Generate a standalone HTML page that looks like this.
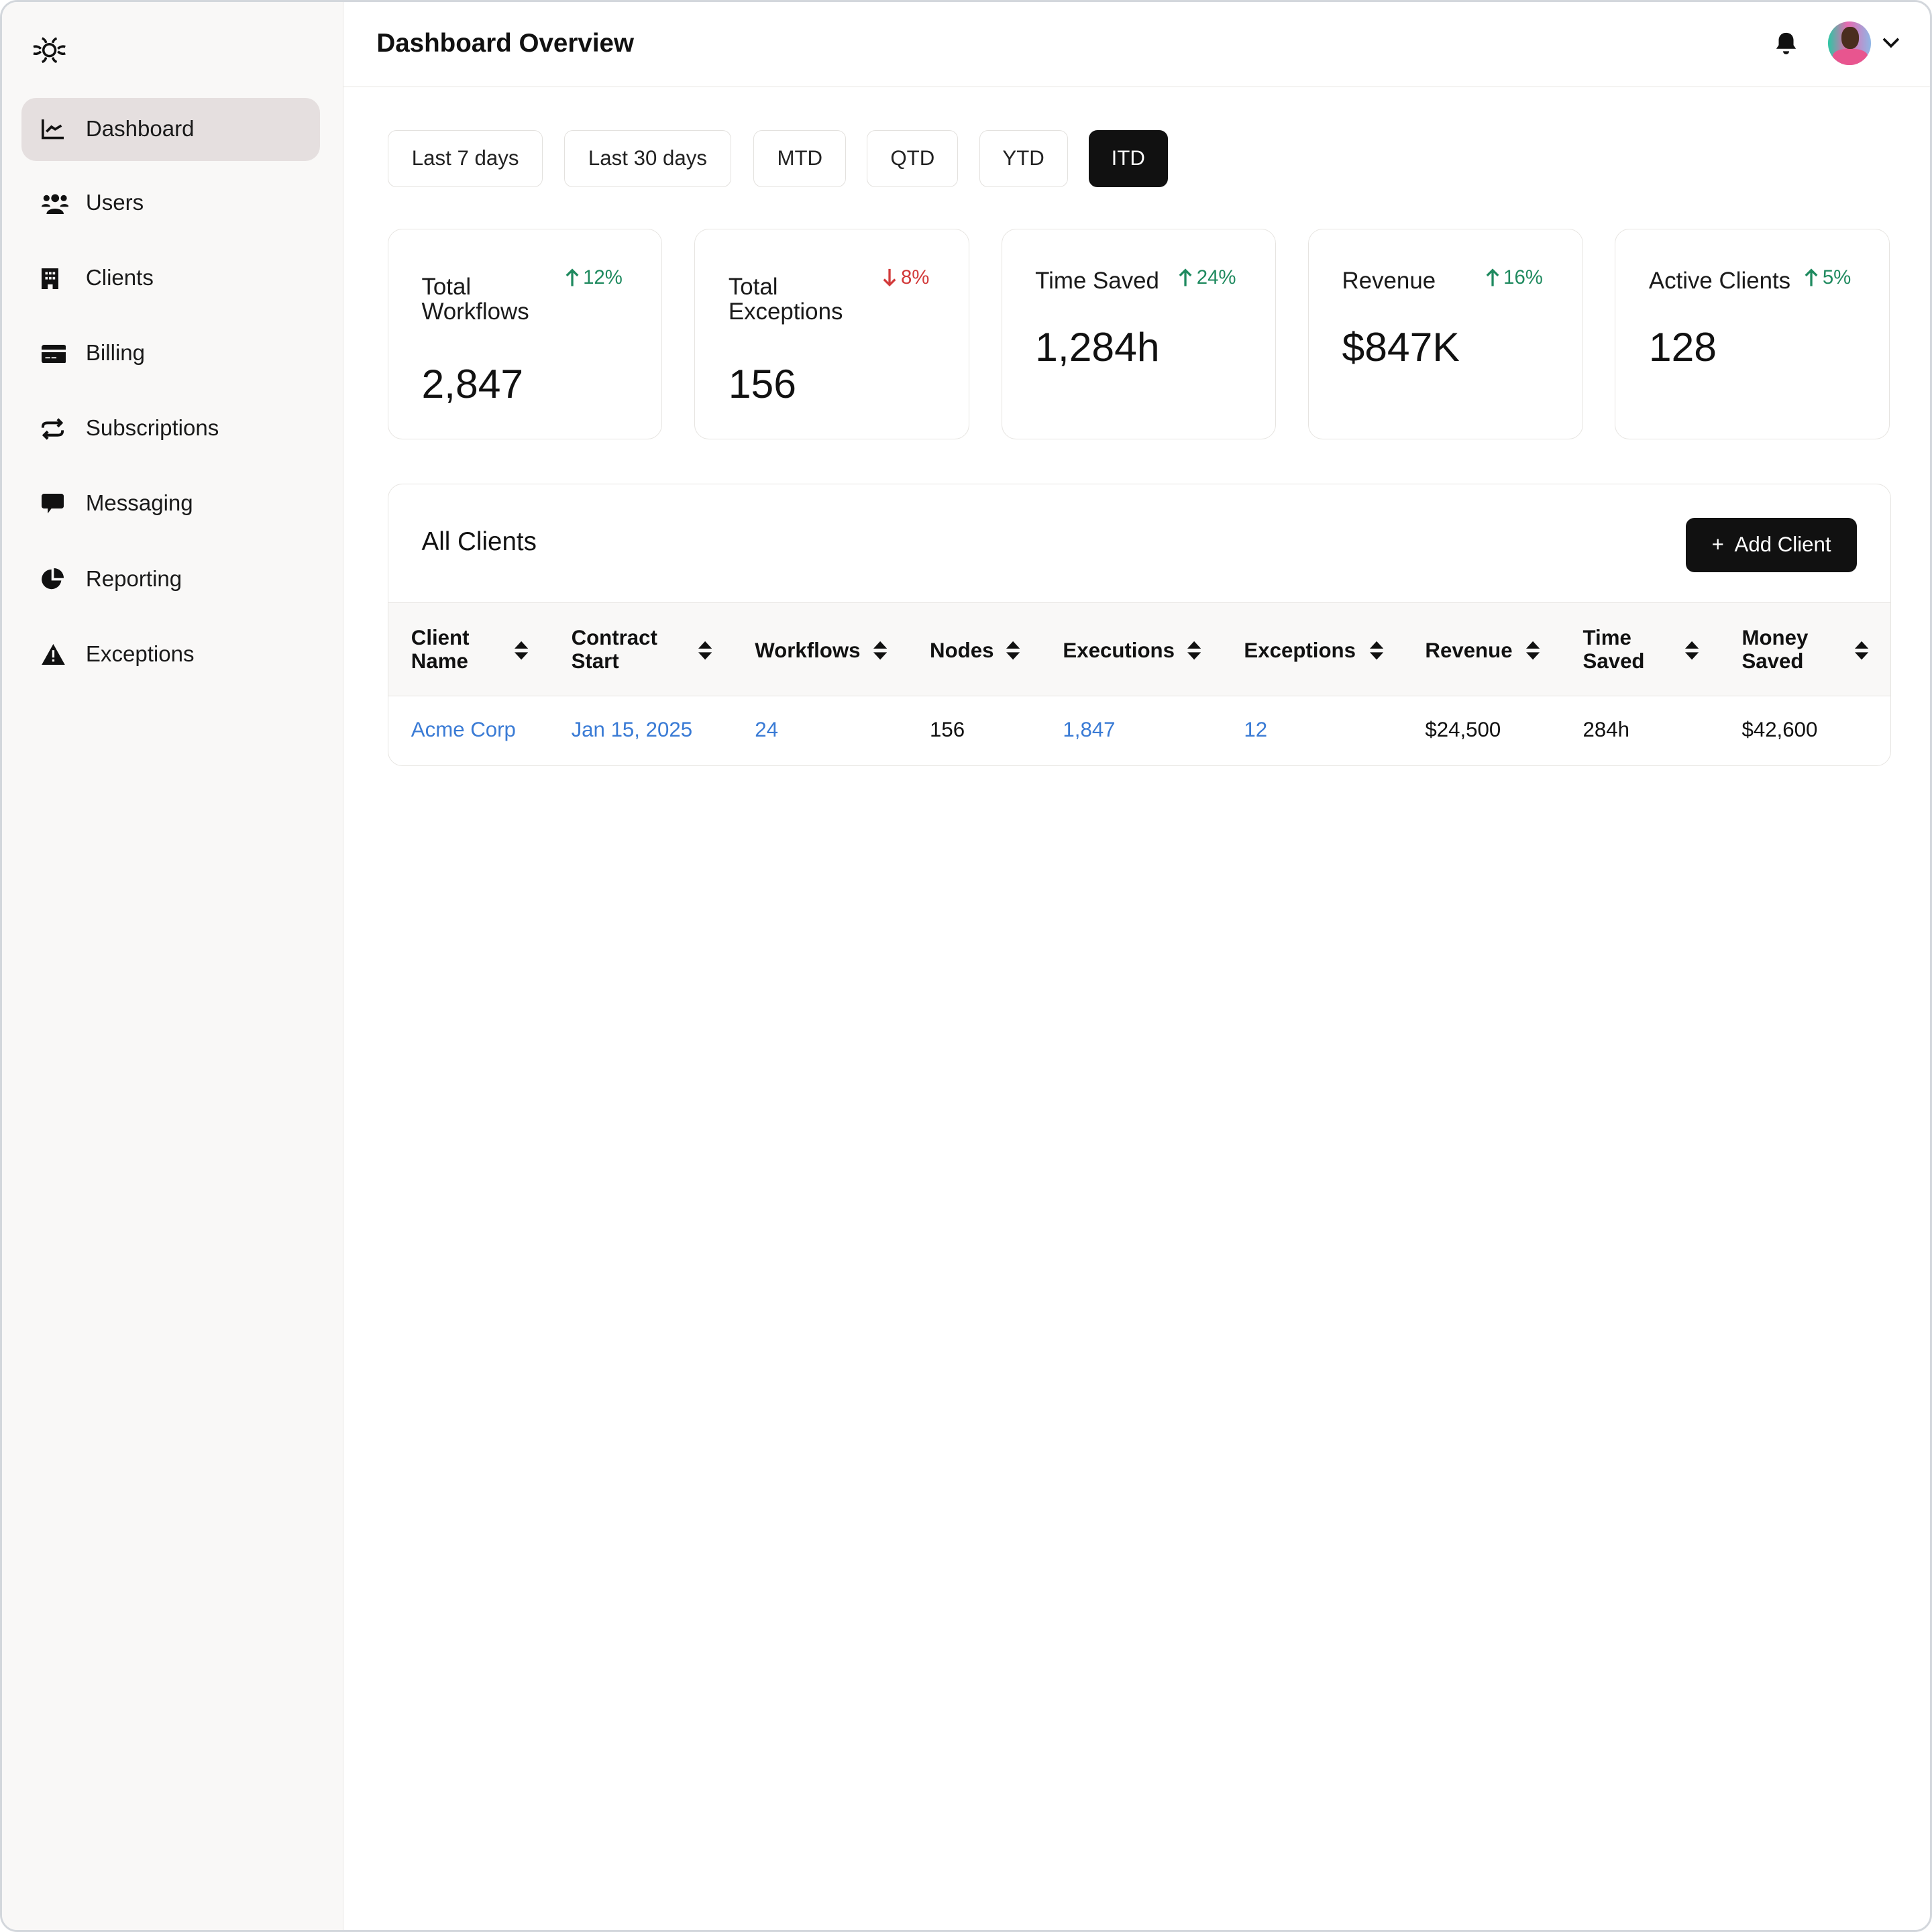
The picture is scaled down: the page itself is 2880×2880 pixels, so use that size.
<!DOCTYPE html>
<html><head><meta charset="utf-8"><style>
*{box-sizing:border-box;margin:0;padding:0}
html,body{width:2880px;height:2880px;overflow:hidden;background:#fff}
#z{zoom:1.836735;width:1568px;height:1568px;position:relative;font-family:"Liberation Sans",sans-serif;color:#111;border:2px solid #d3d7dc;border-radius:14px;overflow:hidden;background:#fff}
.a{position:absolute}
#side{left:0;top:0;width:277px;height:1568px;background:#f9f8f7;border-right:1px solid #e8e6e3}
.nav{position:absolute;left:16px;width:242px;height:51px;display:flex;align-items:center;font-size:18px;color:#1a1a1a}
.nav svg{position:absolute;left:16px}
.nav span{position:absolute;left:52px}
.nav.act{background:#e5dfdf;border-radius:12px}
#hdr{left:277px;top:0;right:0;height:69px;border-bottom:1px solid #e6e4e1}
.btn{position:absolute;top:104px;height:46px;border:1px solid #e3e1de;border-radius:7px;font-size:17px;display:flex;align-items:center;justify-content:center;color:#222;background:#fff}
.card{position:absolute;top:184px;width:223px;height:171px;border:1px solid #e6e4e1;border-radius:12px;background:#fff}
.ct{position:absolute;left:27px;font-size:19px;line-height:20px;color:#1a1a1a}
.cv{position:absolute;left:27px;font-size:33px;color:#111}
.cp{position:absolute;top:30px;font-size:16px;display:flex;align-items:center;gap:3px}
.g{color:#1f8a5f}.r{color:#d23a3a}
.hc{position:absolute;top:507px;font-size:17px;font-weight:bold;line-height:19px;color:#111}
.so{position:absolute;top:518px}
.dc{position:absolute;top:581px;font-size:17px}
.bl{color:#3a7bd5}
</style></head><body><div id="z">
<svg width="0" height="0" style="position:absolute"><defs><g id="s"><path d="M0 7L5.5 1 11 7zM0 10h11L5.5 16z" fill="#111"/></g>
<path id="up" d="M6 15V2M1.5 6.5L6 2l4.5 4.5" fill="none" stroke-width="1.8" stroke="currentColor"/>
<path id="dn" d="M6 1v13M1.5 9.5L6 14l4.5-4.5" fill="none" stroke-width="1.8" stroke="currentColor"/></defs></svg>
<div id="side" class="a">
<svg class="a" style="left:24px;top:25px" width="29" height="28" viewBox="0 0 27 26" fill="none" stroke="#111" stroke-width="1.8"><circle cx="13.5" cy="13" r="4.5"/><path d="M8 4a5 5 0 0 1 3 3.5M19 4a5 5 0 0 0-3 3.5M8 22a5 5 0 0 0 3-3.5M19 22a5 5 0 0 1-3-3.5M1.5 10.5a5 5 0 0 1 5.5 1.5M25.5 10.5a5 5 0 0 0-5.5 1.5M1.5 15.5a5 5 0 0 0 5.5-1.5M25.5 15.5a5 5 0 0 1-5.5-1.5"/></svg>
<div class="nav act" style="top:78px"><svg width="18" height="16" viewBox="0 0 18 16" fill="none" stroke="#111" stroke-width="2"><path d="M1 0v15h17M4 10l4-4 3 2 5-3"/></svg><span>Dashboard</span></div>
<div class="nav" style="top:138px"><svg width="22" height="17" viewBox="0 0 22 17" fill="#111"><circle cx="4" cy="4" r="2.5"/><circle cx="11" cy="4" r="3.2"/><circle cx="18" cy="4" r="2.5"/><path d="M0 11c0-3 7-3 7 0zM15 11c0-3 7-3 7 0zM4 17c0-6 14-6 14 0z"/></svg><span>Users</span></div>
<div class="nav" style="top:199px"><svg width="14" height="17" viewBox="0 0 14 17" fill="#111"><path d="M0 0h14v17H9v-4H5v4H0z"/><rect x="3" y="3" width="2" height="2" fill="#f9f8f7"/><rect x="6" y="3" width="2" height="2" fill="#f9f8f7"/><rect x="9" y="3" width="2" height="2" fill="#f9f8f7"/><rect x="3" y="7" width="2" height="2" fill="#f9f8f7"/><rect x="6" y="7" width="2" height="2" fill="#f9f8f7"/><rect x="9" y="7" width="2" height="2" fill="#f9f8f7"/></svg><span>Clients</span></div>
<div class="nav" style="top:260px"><svg width="20" height="15" viewBox="0 0 20 15" fill="#111"><rect width="20" height="15" rx="2"/><rect x="0" y="4" width="20" height="2" fill="#f9f8f7"/><rect x="3" y="10" width="4" height="1" fill="#f9f8f7"/><rect x="8" y="10" width="4" height="1" fill="#f9f8f7"/></svg><span>Billing</span></div>
<div class="nav" style="top:321px"><svg width="18" height="18" viewBox="0 0 18 18" fill="none" stroke="#111" stroke-width="2.2"><path d="M1 8c0-3 1-4 4-4h11M13 1l3 3-3 3M17 10c0 3-1 4-4 4H2M5 17l-3-3 3-3"/></svg><span>Subscriptions</span></div>
<div class="nav" style="top:382px"><svg width="18" height="17" viewBox="0 0 18 17" fill="#111"><path d="M2 0h14a2 2 0 0 1 2 2v8a2 2 0 0 1-2 2H8l-3 4v-4H2a2 2 0 0 1-2-2V2a2 2 0 0 1 2-2z"/></svg><span>Messaging</span></div>
<div class="nav" style="top:443px"><svg width="19" height="18" viewBox="0 0 19 18" fill="#111"><path d="M8 1a8 8 0 1 0 8 9H8z"/><path d="M10 0a8 8 0 0 1 8 8h-8z"/></svg><span>Reporting</span></div>
<div class="nav" style="top:504px"><svg width="19" height="17" viewBox="0 0 19 17" fill="#111"><path d="M9.5 0L19 17H0z"/><rect x="8.6" y="5" width="1.8" height="6" fill="#f9f8f7"/><rect x="8.6" y="12.5" width="1.8" height="1.8" fill="#f9f8f7"/></svg><span>Exceptions</span></div>
</div>
<div id="hdr" class="a">
<div class="a" style="left:27px;top:22px;font-size:21px;font-weight:bold">Dashboard Overview</div>
<svg class="a" style="left:1162px;top:24px" width="18" height="20" viewBox="0 0 18 20" fill="#111"><path d="M9 1c-4 0-6 3-6 6v4l-2 3h16l-2-3V7c0-3-2-6-6-6z"/><path d="M6.5 16a2.5 2.5 0 0 0 5 0z"/></svg>
<div class="a" style="left:1205px;top:16px;width:35px;height:35px;border-radius:50%;background:linear-gradient(90deg,#2cc7a4,#e869b0 45%,#8fb7e6);overflow:hidden"><div class="a" style="left:11px;top:4px;width:14px;height:18px;border-radius:45%;background:#4a2d1e"></div><div class="a" style="left:4px;top:22px;width:28px;height:14px;background:#e8558f;border-radius:40% 40% 0 0"></div></div>
<svg class="a" style="left:1249px;top:29px" width="14" height="9" viewBox="0 0 14 9" fill="none" stroke="#111" stroke-width="2"><path d="M1 1l6 6 6-6"/></svg>
</div>
<div class="btn" style="left:313px;width:126px">Last 7 days</div>
<div class="btn" style="left:456px;width:136px">Last 30 days</div>
<div class="btn" style="left:610px;width:75px">MTD</div>
<div class="btn" style="left:702px;width:74px">QTD</div>
<div class="btn" style="left:793px;width:72px">YTD</div>
<div class="btn" style="left:882px;width:64px;background:#111;color:#fff;border-color:#111">ITD</div>

<div class="card" style="left:313px"><div class="ct" style="top:37px">Total<br>Workflows</div><div class="cp g" style="left:143px"><svg width="12" height="16"><use href="#up"/></svg>12%</div><div class="cv" style="top:106px">2,847</div></div>
<div class="card" style="left:562px"><div class="ct" style="top:37px">Total<br>Exceptions</div><div class="cp r" style="left:152px"><svg width="12" height="16"><use href="#dn"/></svg>8%</div><div class="cv" style="top:106px">156</div></div>
<div class="card" style="left:811px"><div class="ct" style="top:32px">Time Saved</div><div class="cp g" style="left:143px"><svg width="12" height="16"><use href="#up"/></svg>24%</div><div class="cv" style="top:76px">1,284h</div></div>
<div class="card" style="left:1060px"><div class="ct" style="top:32px">Revenue</div><div class="cp g" style="left:143px"><svg width="12" height="16"><use href="#up"/></svg>16%</div><div class="cv" style="top:76px">$847K</div></div>
<div class="card" style="left:1309px"><div class="ct" style="top:32px">Active Clients</div><div class="cp g" style="left:153px"><svg width="12" height="16"><use href="#up"/></svg>5%</div><div class="cv" style="top:76px">128</div></div>

<div class="a" style="left:313px;top:391px;width:1220px;height:229px;border:1px solid #e6e4e1;border-radius:12px;overflow:hidden">
<div class="a" style="left:27px;top:35px;font-size:21px">All Clients</div>
<div class="a" style="left:1053px;top:27px;width:139px;height:44px;background:#111;color:#fff;border-radius:7px;font-size:17px;display:flex;align-items:center;justify-content:center">+&nbsp; Add Client</div>
<div class="a" style="left:0;top:96px;width:100%;height:76px;background:#f9f8f7;border-top:1px solid #e6e4e1;border-bottom:1px solid #e6e4e1"></div>
</div>
<div class="hc" style="left:332px">Client<br>Name</div>
<div class="hc" style="left:462px">Contract<br>Start</div>
<div class="hc" style="left:611px;top:517px">Workflows</div>
<div class="hc" style="left:753px;top:517px">Nodes</div>
<div class="hc" style="left:861px;top:517px">Executions</div>
<div class="hc" style="left:1008px;top:517px">Exceptions</div>
<div class="hc" style="left:1155px;top:517px">Revenue</div>
<div class="hc" style="left:1283px">Time<br>Saved</div>
<div class="hc" style="left:1412px">Money<br>Saved</div>
<svg class="so" style="left:416px" width="11" height="17"><use href="#s"/></svg>
<svg class="so" style="left:565px" width="11" height="17"><use href="#s"/></svg>
<svg class="so" style="left:707px" width="11" height="17"><use href="#s"/></svg>
<svg class="so" style="left:815px" width="11" height="17"><use href="#s"/></svg>
<svg class="so" style="left:962px" width="11" height="17"><use href="#s"/></svg>
<svg class="so" style="left:1110px" width="11" height="17"><use href="#s"/></svg>
<svg class="so" style="left:1237px" width="11" height="17"><use href="#s"/></svg>
<svg class="so" style="left:1366px" width="11" height="17"><use href="#s"/></svg>
<svg class="so" style="left:1504px" width="11" height="17"><use href="#s"/></svg>
<div class="dc bl" style="left:332px">Acme Corp</div>
<div class="dc bl" style="left:462px">Jan 15, 2025</div>
<div class="dc bl" style="left:611px">24</div>
<div class="dc" style="left:753px">156</div>
<div class="dc bl" style="left:861px">1,847</div>
<div class="dc bl" style="left:1008px">12</div>
<div class="dc" style="left:1155px">$24,500</div>
<div class="dc" style="left:1283px">284h</div>
<div class="dc" style="left:1412px">$42,600</div>
</div></body></html>
